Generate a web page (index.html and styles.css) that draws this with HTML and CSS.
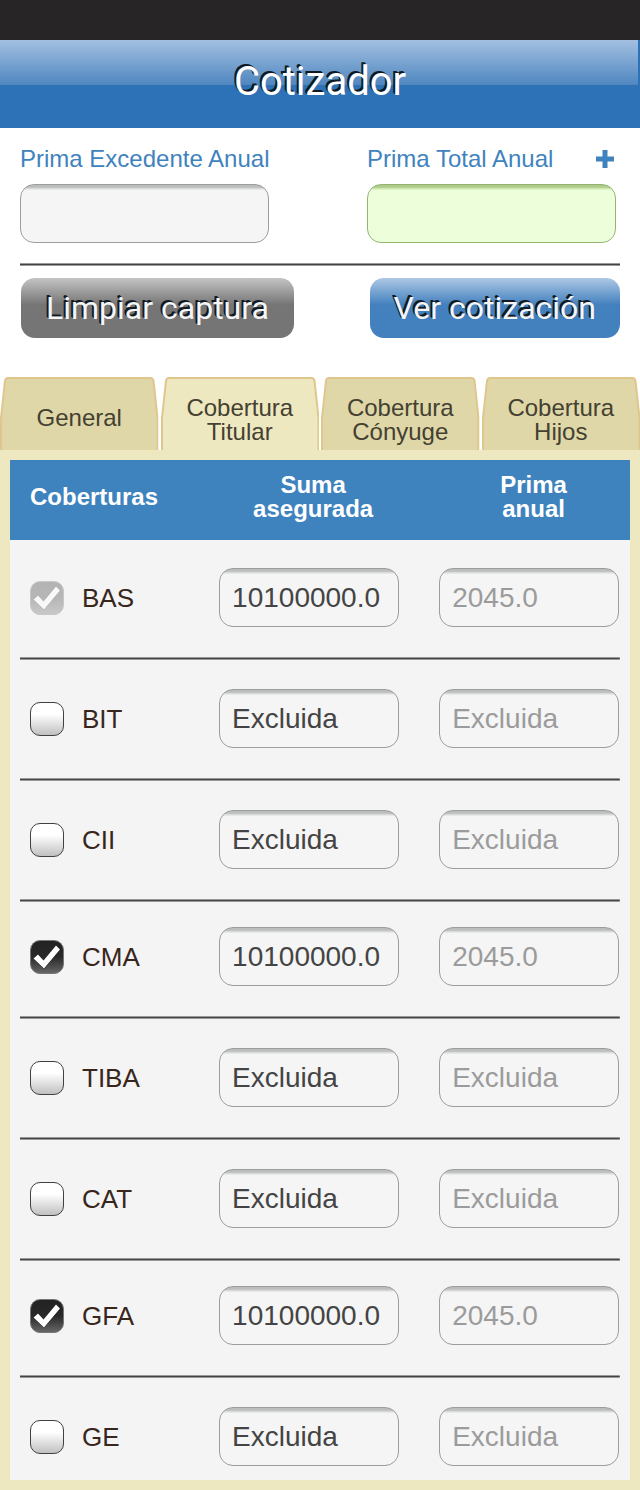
FILE: index.html
```html
<!DOCTYPE html>
<html lang="es">
<head>
<meta charset="utf-8">
<meta name="viewport" content="width=device-width, initial-scale=1">
<title>Cotizador</title>
<link rel="stylesheet" href="styles.css">
</head>
<body>
<svg width="0" height="0" class="defs" aria-hidden="true">
  <symbol id="tab-shape" viewBox="0 0 159 73" preserveAspectRatio="none">
    <path d="M1 74V41L5 4Q5.500 1 8 1H151Q153.500 1 154 4L158 41V74" stroke-width="2"/>
  </symbol>
  <symbol id="tick" viewBox="0 0 34 34">
    <path d="M3.500 18.500L8 14.500L13.500 20.500L26 5.500L30 9.500L14 28.500Z"/>
  </symbol>
</svg>
<div class="status-bar"></div>
<header class="title-bar"><h1>Cotizador</h1></header>
<main>
  <section class="summary">
    <div class="fields">
      <div class="field">
        <div class="field-head"><label for="excedente">Prima Excedente Anual</label></div>
        <input id="excedente" class="box" type="text">
      </div>
      <div class="field">
        <div class="field-head">
          <label for="total">Prima Total Anual</label>
          <button class="plus" type="button" aria-label="Más"><svg width="18" height="18" viewBox="0 0 18 18"><path d="M6.500 0H11.500V6.500H18V11.500H11.500V18H6.500V11.500H0V6.500H6.500Z"/></svg></button>
        </div>
        <input id="total" class="box green" type="text">
      </div>
    </div>
    <hr class="rule">
    <div class="actions">
      <button class="action gray" type="button">Limpiar captura</button>
      <button class="action blue" type="button">Ver cotización</button>
    </div>
  </section>
  <nav class="tabs">
    <button class="tab single" type="button"><svg><use href="#tab-shape"/></svg><span>General</span></button>
    <button class="tab active" type="button"><svg><use href="#tab-shape"/></svg><span>Cobertura<br>Titular</span></button>
    <button class="tab" type="button"><svg><use href="#tab-shape"/></svg><span>Cobertura<br>Cónyuge</span></button>
    <button class="tab" type="button"><svg><use href="#tab-shape"/></svg><span>Cobertura<br>Hijos</span></button>
  </nav>
  <section class="panel">
    <table class="coverages">
      <thead>
        <tr><th class="name">Coberturas</th><th class="sum">Suma<br>asegurada</th><th class="premium">Prima<br>anual</th></tr>
      </thead>
      <tbody>
        <tr class="included">
          <td><label class="option"><span class="check"><input type="checkbox" checked disabled><svg><use href="#tick"/></svg></span>BAS</label></td>
          <td><input class="box" type="text" value="10100000.0" aria-label="Suma asegurada BAS"></td>
          <td><input class="box" type="text" value="2045.0" disabled aria-label="Prima anual BAS"></td>
        </tr>
        <tr>
          <td><label class="option"><span class="check"><input type="checkbox"><svg><use href="#tick"/></svg></span>BIT</label></td>
          <td><input class="box" type="text" value="Excluida" aria-label="Suma asegurada BIT"></td>
          <td><input class="box" type="text" value="Excluida" disabled aria-label="Prima anual BIT"></td>
        </tr>
        <tr>
          <td><label class="option"><span class="check"><input type="checkbox"><svg><use href="#tick"/></svg></span>CII</label></td>
          <td><input class="box" type="text" value="Excluida" aria-label="Suma asegurada CII"></td>
          <td><input class="box" type="text" value="Excluida" disabled aria-label="Prima anual CII"></td>
        </tr>
        <tr class="included">
          <td><label class="option"><span class="check"><input type="checkbox" checked><svg><use href="#tick"/></svg></span>CMA</label></td>
          <td><input class="box" type="text" value="10100000.0" aria-label="Suma asegurada CMA"></td>
          <td><input class="box" type="text" value="2045.0" disabled aria-label="Prima anual CMA"></td>
        </tr>
        <tr>
          <td><label class="option"><span class="check"><input type="checkbox"><svg><use href="#tick"/></svg></span>TIBA</label></td>
          <td><input class="box" type="text" value="Excluida" aria-label="Suma asegurada TIBA"></td>
          <td><input class="box" type="text" value="Excluida" disabled aria-label="Prima anual TIBA"></td>
        </tr>
        <tr>
          <td><label class="option"><span class="check"><input type="checkbox"><svg><use href="#tick"/></svg></span>CAT</label></td>
          <td><input class="box" type="text" value="Excluida" aria-label="Suma asegurada CAT"></td>
          <td><input class="box" type="text" value="Excluida" disabled aria-label="Prima anual CAT"></td>
        </tr>
        <tr class="included">
          <td><label class="option"><span class="check"><input type="checkbox" checked><svg><use href="#tick"/></svg></span>GFA</label></td>
          <td><input class="box" type="text" value="10100000.0" aria-label="Suma asegurada GFA"></td>
          <td><input class="box" type="text" value="2045.0" disabled aria-label="Prima anual GFA"></td>
        </tr>
        <tr>
          <td><label class="option"><span class="check"><input type="checkbox"><svg><use href="#tick"/></svg></span>GE</label></td>
          <td><input class="box" type="text" value="Excluida" aria-label="Suma asegurada GE"></td>
          <td><input class="box" type="text" value="Excluida" disabled aria-label="Prima anual GE"></td>
        </tr>
      </tbody>
    </table>
  </section>
</main>
</body>
</html>
```

FILE: styles.css
```css
* { box-sizing: border-box; }

body {
  margin: 0;
  background: #fff;
  color: #444;
  font-family: "Liberation Sans", Arial, sans-serif;
  font-size: 24px;
  line-height: 24px;
}

button { border: 0; padding: 0; background: none; font: inherit; cursor: pointer; }

.defs { position: absolute; }

.status-bar { height: 40px; background: #272526; }

.title-bar {
  height: 88px;
  background: linear-gradient(#a3c0e1, #4f87c0) no-repeat 0 0 / calc(100% - 2px) 45px #2d72b6;
}

.title-bar h1 {
  margin: 0;
  color: #fff;
  font: 400 40px/84px Roboto, sans-serif;
  text-align: center;
  text-shadow: -1px -1px #0d1a26, -2px -2px #0d1a26;
}

.summary { padding: 18px 20px 39px; }

.fields { display: flex; justify-content: space-between; padding-right: 4px; }

.field { width: 249px; }

.field-head {
  display: flex;
  justify-content: space-between;
  align-items: center;
  height: 26px;
  padding-right: 2px;
  margin-bottom: 12px;
  color: #3f83be;
  white-space: nowrap;
}

.plus { display: flex; fill: #3f83be; }

.box {
  display: block;
  width: 100%;
  height: 59px;
  margin: 0;
  padding: 1px 12px 0;
  border: 1px solid #9c9da0;
  border-radius: 14px;
  background: linear-gradient(#b9bbbb, #c3c5c5 3px, #d9dada 3px 4px, #f5f5f5 5px);
  color: #444;
  font: 28px/32px "Liberation Sans", Arial, sans-serif;
}

.box:disabled { color: #9b9b9b; }

.box.green {
  border-color: #94b572;
  background: linear-gradient(#a9c684, #b9d596 3px, #cbe7ae 3px 4px, #edffda 5px);
}

.rule {
  height: 3px;
  margin: 20px 0 12px;
  border: 0;
  background: linear-gradient(#999 1px, #444 1px 2px, #999 2px);
}

.actions { display: flex; justify-content: space-between; padding-left: 1px; }

.action {
  height: 60px;
  padding: 0 24px;
  border-radius: 14px;
  color: #f5f5f5;
  font: 400 32px/60px Roboto, sans-serif;
  text-shadow: -1px -1px #111a22, -2px -2px #111a22;
  white-space: nowrap;
}

.action.gray { padding: 0 25px; background: linear-gradient(#c4c4c4, #757575 27px); }

.action.blue { background: linear-gradient(#adc8e4, #4280be 27px); }

.tabs { display: grid; grid-template-columns: repeat(4, 1fr); gap: 2px; }

.tab {
  position: relative;
  display: flex;
  align-items: center;
  justify-content: center;
  height: 73px;
  padding-top: 12px;
  color: #444132;
  line-height: 24px;
}

.tab.single { padding-top: 8px; }

.tab svg {
  position: absolute;
  inset: 0;
  width: 100%;
  height: 100%;
  fill: #dfd7a8;
  stroke: #dfc68d;
}

.tab.active svg { fill: #eee8c0; }

.tab span { position: relative; }

.panel { padding: 10px; background: #eee8c0; }

.coverages {
  width: 100%;
  border-collapse: collapse;
  table-layout: fixed;
  background: #f4f4f4;
}

.coverages th {
  height: 80px;
  padding: 0 0 6px;
  background: #3f83be;
  color: #fff;
  font-weight: 700;
}

.coverages th.name { width: 30.5%; padding: 0 0 6px 20px; text-align: left; }

.coverages th.sum { width: 35.5%; padding-left: 8px; }

.coverages th.premium { width: 34%; padding-left: 18px; }

.coverages td { padding: 29px 20px 33px; }

.coverages td:first-child { padding-right: 0; }

.coverages td:last-child { padding-right: 11px; }

.coverages .included td { padding-top: 25px; }

.coverages tbody tr:first-child td { padding-top: 28px; }

.coverages tbody tr {
  background: linear-gradient(#999 1px, #444 1px 2px, #999 2px) no-repeat 50% 100% / calc(100% - 20px) 3px;
}

.coverages tbody tr:last-child { background: none; }

.coverages tbody tr:last-child td { padding-bottom: 14px; }

.option {
  display: flex;
  align-items: center;
  gap: 18px;
  color: #38261c;
  font-size: 26px;
  line-height: 30px;
}

.check { display: grid; width: 34px; height: 34px; }

.check > * { grid-area: 1 / 1; width: 34px; height: 34px; margin: 0; }

.check input {
  appearance: none;
  border: 1px solid #414141;
  border-radius: 10px;
  background: linear-gradient(#fff 35%, #c0c0c0);
}

.check svg { display: none; fill: #fff; stroke: #111; stroke-width: 1; paint-order: stroke; pointer-events: none; }

.check input:checked { border-color: #777; background: linear-gradient(#222, #292929 50%, #666); }

.check input:checked + svg { display: block; }

.check input:checked:disabled { border-color: #c8c8c8; background: linear-gradient(#b3b3b3, #b6b6b6 50%, #c8c8c8); }

.check input:disabled + svg { fill: #f8f8f8; stroke: #a5a5a5; }
```
